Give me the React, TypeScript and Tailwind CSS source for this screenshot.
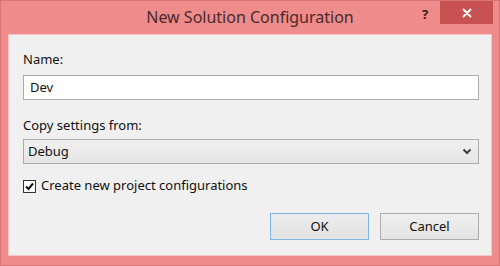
import React from "react";

export default function App() {
  return (
    <div
      className="w-[500px] h-[266px] bg-[#ee8b8b] border border-[#d77474] flex flex-col relative overflow-hidden"
      style={{ fontFamily: '"Segoe UI", "Noto Sans", "Open Sans", sans-serif' }}
    >
      {/* Title bar */}
      <div className="h-[33px] flex items-center justify-center shrink-0 relative">
        <span className="text-[16px] text-[#4a2a2a] leading-none mb-[2px]">New Solution Configuration</span>
        <span className="absolute left-[421px] top-[4px] text-[13px] font-bold text-[#3a2020]">?</span>
        <div className="absolute left-[439px] top-0 w-[53px] h-[23px] bg-[#c85252] flex items-center justify-center">
          <svg width="10" height="10" viewBox="0 0 10 10">
            <path d="M1.5 1.5 L8.5 8.5 M8.5 1.5 L1.5 8.5" stroke="#fff" strokeWidth="1.8" strokeLinecap="round" />
          </svg>
        </div>
      </div>
      {/* Client area */}
      <div className="mx-[7px] h-[222px] bg-[#f0f0f0] border border-[#f7c5c5] flex flex-col pt-[16px] pl-[14px] pr-[12px] text-[13px] text-[#111]">
        <div className="h-[16px] leading-[16px]">Name:</div>
        <div className="mt-[8px] h-[25px] bg-white border border-[#acacac] flex items-center pl-[6px]">Dev</div>
        <div className="mt-[17px] h-[16px] leading-[16px]">Copy settings from:</div>
        <div className="mt-[6px] h-[25px] border border-[#acacac] bg-gradient-to-b from-[#f0f0f0] to-[#e5e5e5] flex items-center justify-between pl-[4px] pr-[6px]">
          <span>Debug</span>
          <svg width="10" height="7" viewBox="0 0 10 7">
            <path d="M1.5 1.5 L5 5 L8.5 1.5" stroke="#404040" strokeWidth="2" fill="none" />
          </svg>
        </div>
        <div className="mt-[15px] h-[14px] flex items-center">
          <div className="w-[13px] h-[13px] border border-[#333] bg-white flex items-center justify-center">
            <svg width="11" height="11" viewBox="0 0 11 11">
              <path d="M2 5.5 L4.5 8 L9 2.5" stroke="#111" strokeWidth="2" fill="none" />
            </svg>
          </div>
          <span className="ml-[5px]">Create new project configurations</span>
        </div>
        <div className="mt-[20px] flex justify-end gap-[11px]">
          <button className="w-[99px] h-[27px] border border-[#7eb4ea] bg-gradient-to-b from-[#ececec] to-[#e3e3e3] text-[13px] text-[#111]">OK</button>
          <button className="w-[99px] h-[27px] border border-[#acacac] bg-gradient-to-b from-[#efefef] to-[#e3e3e3] text-[13px] text-[#111]">Cancel</button>
        </div>
      </div>
    </div>
  );
}
